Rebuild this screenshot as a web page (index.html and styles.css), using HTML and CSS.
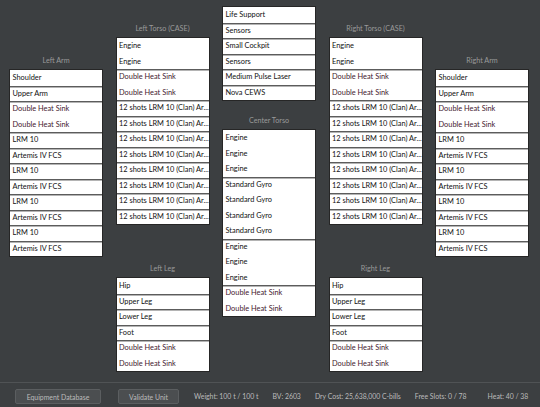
FILE: index.html
```html
<!DOCTYPE html>
<html lang="en">
<head>
    <meta charset="UTF-8">
    <meta name="viewport" content="width=device-width, initial-scale=1.0">
    <title>Criticals</title>
    <link rel="stylesheet" href="styles.css">
</head>
<body>
    <div class="app">
        <main class="layout">
            <section class="col col-arm">
                <div class="loc">
                    <h3 class="loc-title">Left Arm</h3>
                    <ul class="slots">
                        <li class="grp"><div class="slot">Shoulder</div></li>
                        <li class="grp"><div class="slot">Upper Arm</div></li>
                        <li class="grp"><div class="slot hs">Double Heat Sink</div><div class="slot hs">Double Heat Sink</div></li>
                        <li class="grp"><div class="slot">LRM 10</div></li>
                        <li class="grp"><div class="slot">Artemis IV FCS</div></li>
                        <li class="grp"><div class="slot">LRM 10</div></li>
                        <li class="grp"><div class="slot">Artemis IV FCS</div></li>
                        <li class="grp"><div class="slot">LRM 10</div></li>
                        <li class="grp"><div class="slot">Artemis IV FCS</div></li>
                        <li class="grp"><div class="slot">LRM 10</div></li>
                        <li class="grp"><div class="slot">Artemis IV FCS</div></li>
                    </ul>
                </div>
            </section>

            <section class="col col-torso">
                <div class="loc">
                    <h3 class="loc-title">Left Torso (CASE)</h3>
                    <ul class="slots">
                        <li class="grp"><div class="slot">Engine</div><div class="slot">Engine</div></li>
                        <li class="grp"><div class="slot hs">Double Heat Sink</div><div class="slot hs">Double Heat Sink</div></li>
                        <li class="grp"><div class="slot">12 shots LRM 10 (Clan) Ar...</div></li>
                        <li class="grp"><div class="slot">12 shots LRM 10 (Clan) Ar...</div></li>
                        <li class="grp"><div class="slot">12 shots LRM 10 (Clan) Ar...</div></li>
                        <li class="grp"><div class="slot">12 shots LRM 10 (Clan) Ar...</div></li>
                        <li class="grp"><div class="slot">12 shots LRM 10 (Clan) Ar...</div></li>
                        <li class="grp"><div class="slot">12 shots LRM 10 (Clan) Ar...</div></li>
                        <li class="grp"><div class="slot">12 shots LRM 10 (Clan) Ar...</div></li>
                        <li class="grp"><div class="slot">12 shots LRM 10 (Clan) Ar...</div></li>
                    </ul>
                </div>
                <div class="loc leg">
                    <h3 class="loc-title">Left Leg</h3>
                    <ul class="slots">
                        <li class="grp"><div class="slot">Hip</div></li>
                        <li class="grp"><div class="slot">Upper Leg</div></li>
                        <li class="grp"><div class="slot">Lower Leg</div></li>
                        <li class="grp"><div class="slot">Foot</div></li>
                        <li class="grp"><div class="slot hs">Double Heat Sink</div><div class="slot hs">Double Heat Sink</div></li>
                    </ul>
                </div>
            </section>

            <section class="col col-center">
                <div class="loc">
                    <ul class="slots">
                        <li class="grp"><div class="slot">Life Support</div></li>
                        <li class="grp"><div class="slot">Sensors</div></li>
                        <li class="grp"><div class="slot">Small Cockpit</div></li>
                        <li class="grp"><div class="slot">Sensors</div></li>
                        <li class="grp"><div class="slot">Medium Pulse Laser</div></li>
                        <li class="grp"><div class="slot">Nova CEWS</div></li>
                    </ul>
                </div>
                <div class="loc ct">
                    <h3 class="loc-title">Center Torso</h3>
                    <ul class="slots">
                        <li class="grp"><div class="slot">Engine</div><div class="slot">Engine</div><div class="slot">Engine</div></li>
                        <li class="grp"><div class="slot">Standard Gyro</div><div class="slot">Standard Gyro</div><div class="slot">Standard Gyro</div><div class="slot">Standard Gyro</div></li>
                        <li class="grp"><div class="slot">Engine</div><div class="slot">Engine</div><div class="slot">Engine</div></li>
                        <li class="grp"><div class="slot hs">Double Heat Sink</div><div class="slot hs">Double Heat Sink</div></li>
                    </ul>
                </div>
            </section>

            <section class="col col-torso">
                <div class="loc">
                    <h3 class="loc-title">Right Torso (CASE)</h3>
                    <ul class="slots">
                        <li class="grp"><div class="slot">Engine</div><div class="slot">Engine</div></li>
                        <li class="grp"><div class="slot hs">Double Heat Sink</div><div class="slot hs">Double Heat Sink</div></li>
                        <li class="grp"><div class="slot">12 shots LRM 10 (Clan) Ar...</div></li>
                        <li class="grp"><div class="slot">12 shots LRM 10 (Clan) Ar...</div></li>
                        <li class="grp"><div class="slot">12 shots LRM 10 (Clan) Ar...</div></li>
                        <li class="grp"><div class="slot">12 shots LRM 10 (Clan) Ar...</div></li>
                        <li class="grp"><div class="slot">12 shots LRM 10 (Clan) Ar...</div></li>
                        <li class="grp"><div class="slot">12 shots LRM 10 (Clan) Ar...</div></li>
                        <li class="grp"><div class="slot">12 shots LRM 10 (Clan) Ar...</div></li>
                        <li class="grp"><div class="slot">12 shots LRM 10 (Clan) Ar...</div></li>
                    </ul>
                </div>
                <div class="loc leg">
                    <h3 class="loc-title">Right Leg</h3>
                    <ul class="slots">
                        <li class="grp"><div class="slot">Hip</div></li>
                        <li class="grp"><div class="slot">Upper Leg</div></li>
                        <li class="grp"><div class="slot">Lower Leg</div></li>
                        <li class="grp"><div class="slot">Foot</div></li>
                        <li class="grp"><div class="slot hs">Double Heat Sink</div><div class="slot hs">Double Heat Sink</div></li>
                    </ul>
                </div>
            </section>

            <section class="col col-arm">
                <div class="loc">
                    <h3 class="loc-title">Right Arm</h3>
                    <ul class="slots">
                        <li class="grp"><div class="slot">Shoulder</div></li>
                        <li class="grp"><div class="slot">Upper Arm</div></li>
                        <li class="grp"><div class="slot hs">Double Heat Sink</div><div class="slot hs">Double Heat Sink</div></li>
                        <li class="grp"><div class="slot">LRM 10</div></li>
                        <li class="grp"><div class="slot">Artemis IV FCS</div></li>
                        <li class="grp"><div class="slot">LRM 10</div></li>
                        <li class="grp"><div class="slot">Artemis IV FCS</div></li>
                        <li class="grp"><div class="slot">LRM 10</div></li>
                        <li class="grp"><div class="slot">Artemis IV FCS</div></li>
                        <li class="grp"><div class="slot">LRM 10</div></li>
                        <li class="grp"><div class="slot">Artemis IV FCS</div></li>
                    </ul>
                </div>
            </section>
        </main>

        <footer class="status">
            <button class="btn btn-db">Equipment Database</button>
            <button class="btn btn-validate">Validate Unit</button>
            <span class="stat stat-weight">Weight: 100 t / 100 t</span>
            <span class="stat">BV: 2603</span>
            <span class="stat">Dry Cost: 25,638,000 C-bills</span>
            <span class="stat">Free Slots: 0 / 78</span>
            <span class="stat stat-heat">Heat: 40 / 38</span>
        </footer>
    </div>
</body>
</html>
```

FILE: styles.css
```css
body {
    margin: 0;
    background: #3c3f41;
    font-family: "Lato", "Liberation Sans", sans-serif;
}
.app {
    width: 540px;
    height: 407px;
    display: flex;
    flex-direction: column;
}
.layout {
    flex: 1;
    display: flex;
    align-items: flex-start;
    gap: 12.5px;
    padding-left: 9px;
}
.col {
    width: 94px;
    display: flex;
    flex-direction: column;
}
.col-arm {
    margin-top: 53px;
}
.col-torso {
    margin-top: 21px;
}
.col-center {
    margin-top: 6px;
}
.leg {
    margin-top: 36px;
}
.ct {
    margin-top: 12px;
}
.loc-title {
    margin: 0;
    height: 16px;
    line-height: 16px;
    font-size: 7.2px;
    font-weight: normal;
    color: #9a9a9a;
    text-align: center;
}
.slots {
    margin: 0;
    padding: 0;
    list-style: none;
    background: #fff;
    border: 1px solid #262626;
}
.grp + .grp {
    /* group divider, drawn inside so slot height stays put */
    box-shadow: inset 0 1px 0 #5c5c5c, inset 0 2px 0 #b4b4b4;
}
.slot {
    height: 15.5px;
    line-height: 15.5px;
    padding-left: 2.5px;
    font-size: 7.4px;
    color: #111;
    white-space: nowrap;
    overflow: hidden;
}
.slot.hs {
    color: #44202e;
}
.status {
    border-top: 1px solid #505355;
    display: flex;
    align-items: flex-start;
    padding: 6px 0 0 15px;
    box-sizing: border-box;
    height: 25px;
    font-size: 6.9px;
    color: #bbbbbb;
}
.btn {
    flex-shrink: 0;
    height: 15px;
    padding: 0;
    border: 1px solid #5b5e60;
    border-radius: 2px;
    background: #4b4e50;
    color: #bbbbbb;
    font: inherit;
}
.btn-db {
    width: 86px;
}
.btn-validate {
    width: 61px;
    margin-left: 17px;
}
.stat {
    flex-shrink: 0;
    white-space: nowrap;
    line-height: 15px;
    margin-left: 14px;
}
.stat-weight {
    margin-left: 15px;
}
.stat-heat {
    margin-left: 21px;
}
```
